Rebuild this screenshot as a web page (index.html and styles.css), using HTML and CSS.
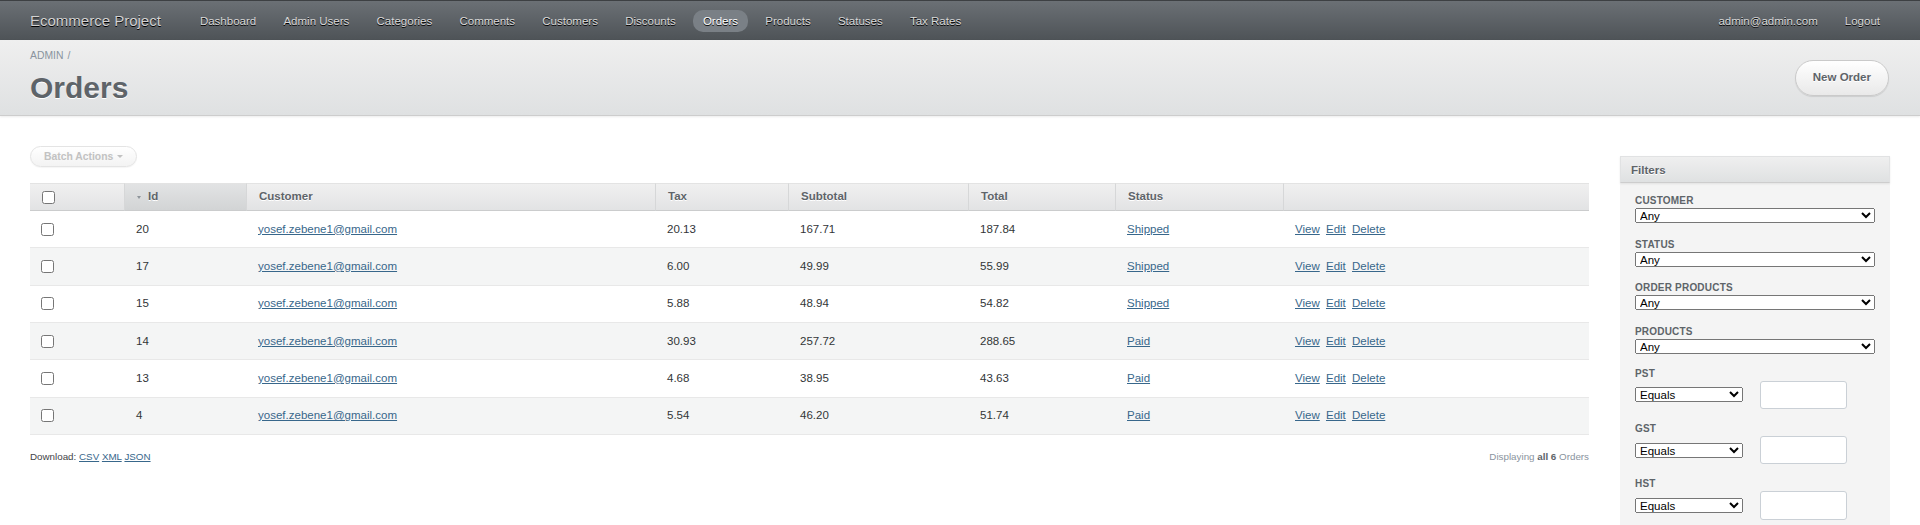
FILE: index.html
```html
<!DOCTYPE html>
<html lang="en">
<head>
<meta charset="utf-8">
<title>Orders | Ecommerce Project</title>
<link rel="stylesheet" href="styles.css">
</head>
<body>
<div class="header">
  <h1 class="site-title">Ecommerce Project</h1>
  <ul class="tabs">
    <li><a href="#">Dashboard</a></li>
    <li><a href="#">Admin Users</a></li>
    <li><a href="#">Categories</a></li>
    <li><a href="#">Comments</a></li>
    <li><a href="#">Customers</a></li>
    <li><a href="#">Discounts</a></li>
    <li class="current"><a href="#">Orders</a></li>
    <li><a href="#">Products</a></li>
    <li><a href="#">Statuses</a></li>
    <li><a href="#">Tax Rates</a></li>
  </ul>
  <ul class="tabs utility">
    <li><a href="#">admin@admin.com</a></li>
    <li><a href="#">Logout</a></li>
  </ul>
</div>

<div class="title-bar">
  <div class="title-left">
    <div class="breadcrumb"><a href="#">Admin</a><span class="sep">/</span></div>
    <h2 class="page-title">Orders</h2>
  </div>
  <a class="button" href="#">New Order</a>
</div>

<div class="content">
  <div class="main">
    <div class="table-tools">
      <span class="batch-btn">Batch Actions<span class="caret"></span></span>
    </div>
    <table class="index-table">
      <colgroup>
        <col class="w-sel"><col class="w-id"><col class="w-cust"><col class="w-tax"><col class="w-sub"><col class="w-total"><col class="w-status"><col class="w-act">
      </colgroup>
      <thead>
        <tr>
          <th class="col-select"><input type="checkbox"></th>
          <th class="sorted"><span class="sort-arrow"></span>Id</th>
          <th>Customer</th>
          <th>Tax</th>
          <th>Subtotal</th>
          <th>Total</th>
          <th>Status</th>
          <th></th>
        </tr>
      </thead>
      <tbody>
        <tr class="odd">
          <td class="col-select"><input type="checkbox"></td>
          <td>20</td>
          <td><a href="#">yosef.zebene1@gmail.com</a></td>
          <td>20.13</td><td>167.71</td><td>187.84</td>
          <td><a href="#">Shipped</a></td>
          <td class="actions"><a href="#">View</a> <a href="#">Edit</a> <a href="#">Delete</a></td>
        </tr>
        <tr class="even">
          <td class="col-select"><input type="checkbox"></td>
          <td>17</td>
          <td><a href="#">yosef.zebene1@gmail.com</a></td>
          <td>6.00</td><td>49.99</td><td>55.99</td>
          <td><a href="#">Shipped</a></td>
          <td class="actions"><a href="#">View</a> <a href="#">Edit</a> <a href="#">Delete</a></td>
        </tr>
        <tr class="odd">
          <td class="col-select"><input type="checkbox"></td>
          <td>15</td>
          <td><a href="#">yosef.zebene1@gmail.com</a></td>
          <td>5.88</td><td>48.94</td><td>54.82</td>
          <td><a href="#">Shipped</a></td>
          <td class="actions"><a href="#">View</a> <a href="#">Edit</a> <a href="#">Delete</a></td>
        </tr>
        <tr class="even">
          <td class="col-select"><input type="checkbox"></td>
          <td>14</td>
          <td><a href="#">yosef.zebene1@gmail.com</a></td>
          <td>30.93</td><td>257.72</td><td>288.65</td>
          <td><a href="#">Paid</a></td>
          <td class="actions"><a href="#">View</a> <a href="#">Edit</a> <a href="#">Delete</a></td>
        </tr>
        <tr class="odd">
          <td class="col-select"><input type="checkbox"></td>
          <td>13</td>
          <td><a href="#">yosef.zebene1@gmail.com</a></td>
          <td>4.68</td><td>38.95</td><td>43.63</td>
          <td><a href="#">Paid</a></td>
          <td class="actions"><a href="#">View</a> <a href="#">Edit</a> <a href="#">Delete</a></td>
        </tr>
        <tr class="even">
          <td class="col-select"><input type="checkbox"></td>
          <td>4</td>
          <td><a href="#">yosef.zebene1@gmail.com</a></td>
          <td>5.54</td><td>46.20</td><td>51.74</td>
          <td><a href="#">Paid</a></td>
          <td class="actions"><a href="#">View</a> <a href="#">Edit</a> <a href="#">Delete</a></td>
        </tr>
      </tbody>
    </table>
    <div class="index-footer">
      <div class="download-links">Download: <a href="#">CSV</a> <a href="#">XML</a> <a href="#">JSON</a></div>
      <div class="pagination-info">Displaying <b>all 6</b> Orders</div>
    </div>
  </div>

  <div class="sidebar">
    <div class="panel">
      <h3 class="panel-header">Filters</h3>
      <div class="panel-body">
        <div class="filter filter-select">
          <label>Customer</label>
          <select><option>Any</option></select>
        </div>
        <div class="filter filter-select">
          <label>Status</label>
          <select><option>Any</option></select>
        </div>
        <div class="filter filter-select">
          <label>Order Products</label>
          <select><option>Any</option></select>
        </div>
        <div class="filter filter-select last-select">
          <label>Products</label>
          <select><option>Any</option></select>
        </div>
        <div class="filter filter-numeric">
          <label>PST</label>
          <div class="numeric-row">
            <select><option>Equals</option></select>
            <input type="text">
          </div>
        </div>
        <div class="filter filter-numeric">
          <label>GST</label>
          <div class="numeric-row">
            <select><option>Equals</option></select>
            <input type="text">
          </div>
        </div>
        <div class="filter filter-numeric">
          <label>HST</label>
          <div class="numeric-row">
            <select><option>Equals</option></select>
            <input type="text">
          </div>
        </div>
      </div>
    </div>
  </div>
</div>
</body>
</html>
```

FILE: styles.css
```css
* { box-sizing: border-box; }
html, body { margin: 0; padding: 0; }
body {
  font-family: "Liberation Sans", Arial, Helvetica, sans-serif;
  font-size: 11.52px;
  line-height: 1.5;
  color: #323537;
  background: #fff;
}
a { color: #38678b; }

/* Header */
.header {
  display: flex;
  align-items: center;
  height: 40px;
  padding: 1px 30px 0 30px;
  border-top: 1px solid #3d4043;
  background: linear-gradient(#6b7075, #4e5357);
  text-shadow: 0 1px 0 #000;
}
.site-title {
  margin: 0 29px 0 0;
  font-size: 15px;
  line-height: 18px;
  font-weight: normal;
  color: #d2d2d2;
}
.tabs {
  display: flex;
  gap: 7.2px;
  list-style: none;
  margin: 0;
  padding: 0;
}
.tabs a {
  display: block;
  padding: 3px 10px;
  line-height: 16px;
  border-radius: 10px;
  color: #d9d9d9;
  text-decoration: none;
}
.tabs .current a {
  background: #7a8086;
  color: #fff;
}
.utility { margin-left: auto; gap: 7px; }

/* Title bar */
.title-bar {
  display: flex;
  justify-content: space-between;
  align-items: center;
  height: 76px;
  padding: 0 31px 0 30px;
  background: linear-gradient(#efefef, #dfe1e2);
  border-bottom: 1px solid #cdcdcd;
  box-shadow: 0 1px 2px rgba(0, 0, 0, 0.08);
}
.title-left { align-self: flex-start; padding-top: 8px; }
.breadcrumb {
  font-size: 10.37px;
  line-height: 15px;
  color: #8a949e;
  text-transform: uppercase;
}
.breadcrumb a { color: #8a949e; text-decoration: none; }
.breadcrumb .sep { margin-left: 4px; }
.page-title {
  margin: 7px 0 0 0;
  font-size: 30px;
  line-height: 36px;
  font-weight: bold;
  color: #5e6469;
  text-shadow: 0 1px 0 #fff;
}
.button {
  display: inline-flex;
  align-items: center;
  height: 36px;
  padding: 0 17px;
  border: 1px solid #cacaca;
  border-radius: 200px;
  background: linear-gradient(#ffffff, #e9e9e9);
  box-shadow: 0 1px 1px rgba(0, 0, 0, 0.1);
  color: #5e6469;
  font-weight: bold;
  text-decoration: none;
  text-shadow: 0 1px 0 #fff;
}

/* Content */
.content {
  display: flex;
  align-items: flex-start;
  padding: 30px;
}
.main { flex: 1; min-width: 0; }
.sidebar { flex: none; width: 270px; margin: 10px 0 0 31px; }

.table-tools { margin-bottom: 16px; }
.batch-btn {
  display: inline-flex;
  align-items: center;
  height: 21px;
  padding: 0 13px;
  border: 1px solid #e4e4e4;
  border-radius: 200px;
  background: linear-gradient(#ffffff, #f3f3f3);
  box-shadow: 0 1px 1px rgba(0, 0, 0, 0.04);
  color: #c2c2c2;
  font-size: 10.37px;
  font-weight: bold;
}
.caret {
  display: inline-block;
  margin-left: 4px;
  border-left: 3px solid transparent;
  border-right: 3px solid transparent;
  border-top: 3px solid #c2c2c2;
}

/* Table */
.index-table {
  width: 100%;
  table-layout: fixed;
  border-collapse: separate;
  border-spacing: 0;
}
.w-sel { width: 94px; }
.w-id { width: 122px; }
.w-cust { width: 409px; }
.w-tax { width: 133px; }
.w-sub { width: 180px; }
.w-total { width: 147px; }
.w-status { width: 168px; }
.w-act { width: 306px; }

.index-table th {
  height: 28px;
  padding: 0 12px;
  text-align: left;
  font-weight: bold;
  color: #5e6469;
  vertical-align: middle;
  background: linear-gradient(#f0f0f0, #e2e3e4);
  border-top: 1px solid #e3e3e3;
  border-bottom: 1px solid #cbcccd;
  border-left: 1px solid #d6d7d8;
  text-shadow: 0 1px 0 #fff;
  white-space: nowrap;
}
.index-table th:first-child { border-left: 0; }
.index-table th.sorted { background: linear-gradient(#e2e3e4, #d2d4d5); }
.sort-arrow {
  display: inline-block;
  vertical-align: middle;
  margin-right: 7px;
  border-left: 2.5px solid transparent;
  border-right: 2.5px solid transparent;
  border-top: 3px solid #8e959b;
}
.index-table td {
  height: 37.33px;
  padding: 0 12px;
  vertical-align: middle;
  border-bottom: 1px solid #e8e8e8;
  white-space: nowrap;
}
.index-table tr.even td { background: #f4f5f5; }
.index-table input[type="checkbox"] {
  display: block;
  margin: 0;
  width: 13px;
  height: 13px;
}
.index-table td.col-select { padding-left: 11px; }
.actions a { margin-right: 3px; }

.index-footer {
  display: flex;
  justify-content: space-between;
  margin-top: 15px;
  font-size: 9.8px;
  line-height: 14px;
}
.download-links { color: #3f4447; }
.pagination-info { color: #8a949e; }
.pagination-info b { color: #5e6469; }

/* Sidebar */
.panel { background: #f4f4f4; }
.panel-header {
  margin: 0;
  height: 27px;
  padding: 0 10px;
  line-height: 27px;
  font-size: 11.52px;
  font-weight: bold;
  color: #5e6469;
  background: linear-gradient(#efefef, #dfe1e2);
  border: 1px solid #e1e2e3;
  border-bottom-color: #cdcdcd;
  box-shadow: 0 1px 2px rgba(0, 0, 0, 0.08);
  text-shadow: 0 1px 0 #fff;
}
.panel-body { padding: 10px 15px 20px; }
.filter { margin-bottom: 13.6px; }
.filter label {
  display: block;
  font-size: 10px;
  line-height: 15px;
  font-weight: bold;
  letter-spacing: 0.2px;
  text-transform: uppercase;
  color: #5e6469;
}
.filter select {
  display: block;
  height: 15px;
  padding: 0;
  font-family: "Liberation Sans", Arial, sans-serif;
  font-size: 11.52px;
  color: #000;
}
.filter-select select { width: 100%; margin-bottom: 1.5px; }
.filter.last-select { margin-bottom: 11.8px; }
.filter-numeric { margin-bottom: 12px; }
.numeric-row {
  display: flex;
  align-items: center;
  gap: 16.6px;
}
.numeric-row select { width: 108px; }
.numeric-row input {
  width: 87.4px;
  height: 28.4px;
  padding: 3px;
  border: 1px solid #cad0d6;
  border-radius: 3px;
  background: #fff;
  font-family: "Liberation Sans", Arial, sans-serif;
  font-size: 11.52px;
}
```
